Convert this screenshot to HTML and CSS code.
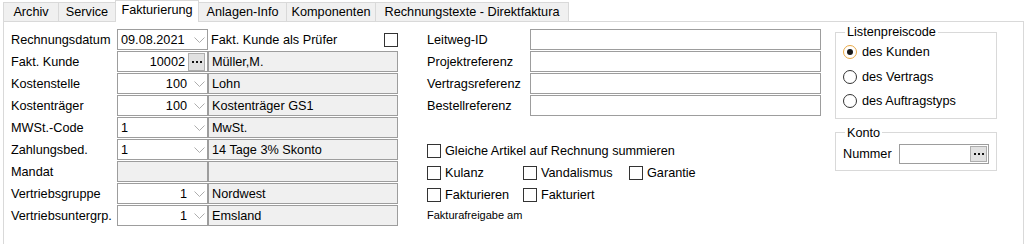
FILE: index.html
```html
<!DOCTYPE html>
<html lang="de">
<head>
<meta charset="utf-8">
<title>Fakturierung</title>
<link rel="stylesheet" href="styles.css">
</head>
<body>
<div class="tabs">
  <div class="tab t-archiv">Archiv</div>
  <div class="tab t-service">Service</div>
  <div class="tab active t-fakt">Fakturierung</div>
  <div class="tab t-anlagen">Anlagen-Info</div>
  <div class="tab t-komp">Komponenten</div>
  <div class="tab t-rech last">Rechnungstexte - Direktfaktura</div>
</div>
<div class="panel">
  <div class="col-left">
    <div class="lbl">Rechnungsdatum</div>
    <div class="box combo"><span class="val">09.08.2021</span><svg class="chev" width="11" height="6" viewBox="0 0 11 6"><path d="M0.5 0.5 L5.5 5.5 L10.5 0.5" /></svg></div>
    <div class="check-cell"><span>Fakt. Kunde als Prüfer</span><span class="cb"></span></div>

    <div class="lbl">Fakt. Kunde</div>
    <div class="box picker"><span class="val right">10002</span><span class="dots-btn"><svg width="10" height="2" viewBox="0 0 10 2"><rect x="0" y="0" width="2" height="2"/><rect x="4" y="0" width="2" height="2"/><rect x="8" y="0" width="2" height="2"/></svg></span></div>
    <div class="box desc">Müller,M.</div>

    <div class="lbl">Kostenstelle</div>
    <div class="box combo"><span class="val right">100</span><svg class="chev" width="11" height="6" viewBox="0 0 11 6"><path d="M0.5 0.5 L5.5 5.5 L10.5 0.5" /></svg></div>
    <div class="box desc">Lohn</div>

    <div class="lbl">Kostenträger</div>
    <div class="box combo"><span class="val right">100</span><svg class="chev" width="11" height="6" viewBox="0 0 11 6"><path d="M0.5 0.5 L5.5 5.5 L10.5 0.5" /></svg></div>
    <div class="box desc">Kostenträger GS1</div>

    <div class="lbl">MWSt.-Code</div>
    <div class="box combo"><span class="val">1</span><svg class="chev" width="11" height="6" viewBox="0 0 11 6"><path d="M0.5 0.5 L5.5 5.5 L10.5 0.5" /></svg></div>
    <div class="box desc">MwSt.</div>

    <div class="lbl">Zahlungsbed.</div>
    <div class="box combo"><span class="val">1</span><svg class="chev" width="11" height="6" viewBox="0 0 11 6"><path d="M0.5 0.5 L5.5 5.5 L10.5 0.5" /></svg></div>
    <div class="box desc">14 Tage 3% Skonto</div>

    <div class="lbl">Mandat</div>
    <div class="box desc"></div>
    <div class="box desc"></div>

    <div class="lbl">Vertriebsgruppe</div>
    <div class="box combo"><span class="val right">1</span><svg class="chev" width="11" height="6" viewBox="0 0 11 6"><path d="M0.5 0.5 L5.5 5.5 L10.5 0.5" /></svg></div>
    <div class="box desc">Nordwest</div>

    <div class="lbl">Vertriebsuntergrp.</div>
    <div class="box combo"><span class="val right">1</span><svg class="chev" width="11" height="6" viewBox="0 0 11 6"><path d="M0.5 0.5 L5.5 5.5 L10.5 0.5" /></svg></div>
    <div class="box desc">Emsland</div>
  </div>

  <div class="col-mid">
    <div class="refs">
      <div class="lbl">Leitweg-ID</div>
      <div class="box text"></div>
      <div class="lbl">Projektreferenz</div>
      <div class="box text"></div>
      <div class="lbl">Vertragsreferenz</div>
      <div class="box text"></div>
      <div class="lbl">Bestellreferenz</div>
      <div class="box text"></div>
    </div>
    <div class="checks">
      <div class="chk span3"><span class="cb"></span><span>Gleiche Artikel auf Rechnung summieren</span></div>
      <div class="chk"><span class="cb"></span><span>Kulanz</span></div>
      <div class="chk"><span class="cb"></span><span>Vandalismus</span></div>
      <div class="chk"><span class="cb"></span><span>Garantie</span></div>
      <div class="chk"><span class="cb"></span><span>Fakturieren</span></div>
      <div class="chk"><span class="cb"></span><span>Fakturiert</span></div>
    </div>
    <div class="freigabe">Fakturafreigabe am</div>
  </div>

  <div class="col-right">
    <fieldset class="group list">
      <legend>Listenpreiscode</legend>
      <div class="radio-row"><span class="radio checked"></span><span>des Kunden</span></div>
      <div class="radio-row"><span class="radio"></span><span>des Vertrags</span></div>
      <div class="radio-row"><span class="radio"></span><span>des Auftragstyps</span></div>
    </fieldset>
    <fieldset class="group konto">
      <legend>Konto</legend>
      <div class="konto-row">
        <span class="konto-lbl">Nummer</span>
        <div class="box konto-input"><span class="val"></span><span class="dots-btn small"><svg width="10" height="2" viewBox="0 0 10 2"><rect x="0" y="0" width="2" height="2"/><rect x="4" y="0" width="2" height="2"/><rect x="8" y="0" width="2" height="2"/></svg></span></div>
      </div>
    </fieldset>
  </div>
</div>
</body>
</html>
```

FILE: styles.css
```css
html, body {
  margin: 0;
  padding: 0;
  background: #ffffff;
}
body {
  font-family: "Liberation Sans", Arial, sans-serif;
  font-size: 12.7px;
  color: #000;
  width: 1026px;
  height: 244px;
  overflow: hidden;
}

/* Tabs */
.tabs {
  display: flex;
  align-items: flex-end;
  height: 21px;
  padding-left: 3px;
  position: relative;
  z-index: 2;
}
.tab {
  box-sizing: border-box;
  height: 19px;
  background: #f0f0f0;
  border-top: 1px solid #d9d9d9;
  border-left: 1px solid #d9d9d9;
  display: flex;
  align-items: center;
  justify-content: center;
  white-space: nowrap;
  padding-bottom: 1px;
}
.tab.last { border-right: 1px solid #d9d9d9; }
.tab.active {
  height: 22px;
  margin-bottom: -1px;
  background: #ffffff;
  border-right: 1px solid #d9d9d9;
  padding-bottom: 3px;
}
.t-archiv { width: 55px; }
.t-service { width: 57px; }
.t-fakt { width: 84px; }
.t-anlagen { width: 87px; border-left: none; }
.t-komp { width: 89px; }
.t-rech { width: 194px; }

/* Panel */
.panel {
  box-sizing: border-box;
  margin-left: 3px;
  width: 1021px;
  height: 223px;
  border: 1px solid #d9d9d9;
  border-bottom: none;
  display: flex;
  align-items: flex-start;
}

.lbl {
  display: flex;
  align-items: center;
  white-space: nowrap;
}

.box {
  box-sizing: border-box;
  border: 1px solid #9d9d9d;
  background: #fff;
  display: flex;
  align-items: center;
  white-space: nowrap;
  overflow: hidden;
}
.box .val {
  flex: 1;
  padding-left: 3px;
}
.box .val.right {
  text-align: right;
  padding-right: 7px;
}
.box.picker .val.right { padding-right: 3px; }
.box.desc {
  background: #f0f0f0;
  padding-left: 3px;
}
.chev {
  margin-right: 2px;
  flex: none;
}
.chev path {
  fill: none;
  stroke: #adadad;
  stroke-width: 1;
}

.dots-btn {
  box-sizing: border-box;
  width: 17px;
  height: 18px;
  margin-right: 2px;
  background: #e1e1e1;
  border: 1px solid #adadad;
  display: flex;
  align-items: center;
  justify-content: center;
  flex: none;
}
.dots-btn svg rect { fill: #111; }
.dots-btn.small { height: 16px; margin-right: 1px; }

.cb {
  box-sizing: border-box;
  width: 14px;
  height: 14px;
  border: 1px solid #333;
  background: #fff;
  flex: none;
}

/* Left column */
.col-left {
  margin: 7px 0 0 7px;
  display: grid;
  grid-template-columns: 106px 91px 190px;
  grid-auto-rows: 21px;
  row-gap: 1px;
}
.check-cell {
  display: flex;
  align-items: center;
  justify-content: space-between;
  padding-left: 3px;
  padding-top: 1px;
}

/* Middle column */
.col-mid {
  margin: 7px 0 0 29px;
}
.refs {
  display: grid;
  grid-template-columns: 103px 291px;
  grid-auto-rows: 21px;
  row-gap: 1px;
}
.checks {
  margin-top: 24px;
  display: grid;
  grid-template-columns: 96px 106px auto;
  grid-auto-rows: 22px;
}
.chk {
  display: flex;
  align-items: center;
  gap: 4px;
  white-space: nowrap;
}
.chk.span3 { grid-column: 1 / 4; }
.freigabe {
  font-size: 11px;
  line-height: 18px;
}

/* Right column */
.col-right {
  margin: 3px 0 0 14px;
  display: flex;
  flex-direction: column;
}
.group {
  box-sizing: border-box;
  width: 162px;
  margin: 0;
  border: 1px solid #d9d9d9;
  min-width: 0;
}
.group legend {
  margin-left: 2px;
  padding: 0 2px;
  line-height: 14px;
}
.group.list {
  padding: 1px 0 4px 7px;
}
.group.konto {
  margin-top: 7px;
  padding: 4px 0 6px 7px;
}
.radio-row {
  height: 24.5px;
  display: flex;
  align-items: center;
  gap: 5px;
}
.radio {
  box-sizing: border-box;
  width: 14px;
  height: 14px;
  border: 1px solid #333;
  border-radius: 50%;
  background: #fff;
  display: flex;
  align-items: center;
  justify-content: center;
  flex: none;
}
.radio.checked {
  border-color: #e9a845;
}
.radio.checked::after {
  content: "";
  width: 6px;
  height: 6px;
  border-radius: 50%;
  background: #1a1a1a;
}
.konto-row {
  display: flex;
  align-items: center;
}
.konto-lbl {
  width: 56px;
}
.konto-input {
  width: 90px;
  height: 20px;
}
```
